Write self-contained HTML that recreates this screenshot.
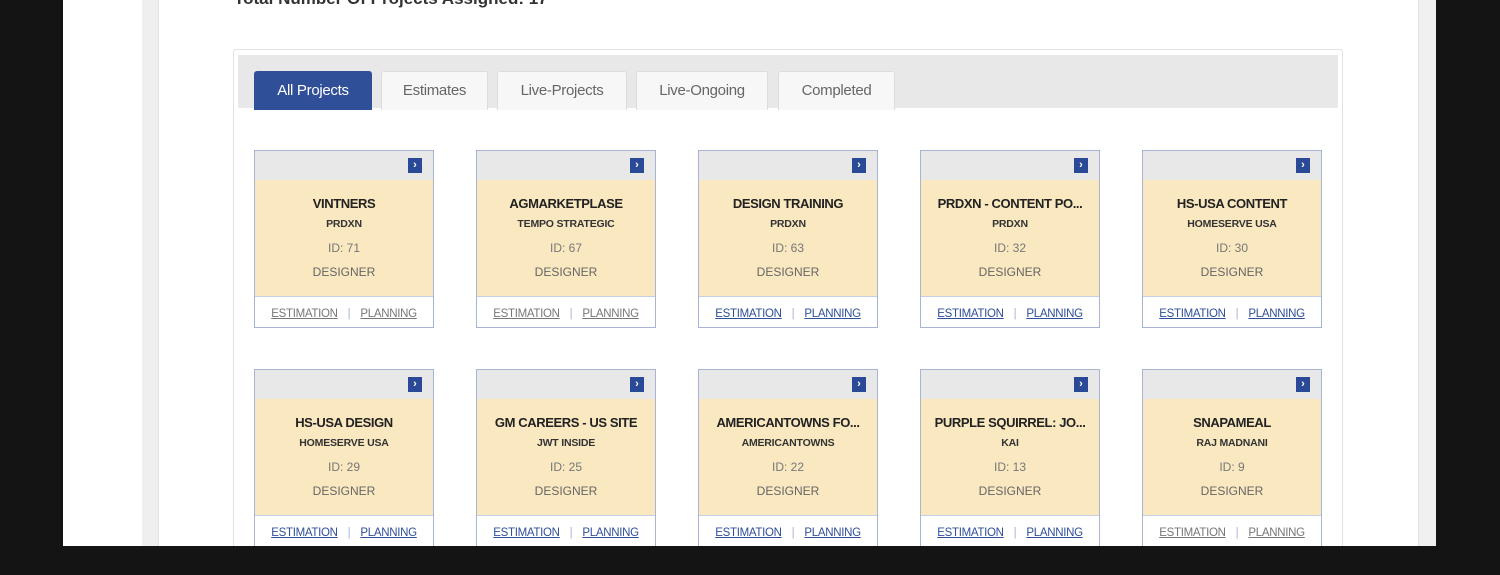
<!DOCTYPE html>
<html><head><style>
body{margin:0;width:1500px;height:575px;background:#141414;position:relative;overflow:hidden;font-family:"Liberation Sans",sans-serif}
.scr{position:absolute;left:63px;top:0;width:1372px;height:546px;background:#fff}
.gl{position:absolute;left:142px;top:0;width:16px;height:546px;background:#efefef;border-right:1px solid #e2e2e2}
.gr{position:absolute;left:1418px;top:0;width:17px;height:546px;background:#f0f0f0;border-left:1px solid #e2e2e2}
.ttl{position:absolute;left:234px;top:-11px;font-size:17px;color:#333;font-weight:bold}
.panel{position:absolute;left:233px;top:49px;width:1108px;height:520px;border:1px solid #e2e2e2;border-radius:3px;background:#fff}
.bar{position:absolute;left:4px;top:5px;width:1100px;height:53px;background:#e8e8e8}
.tab{position:absolute;top:21px;height:38px;background:#f7f7f7;border:1px solid #ddd;border-bottom:none;border-radius:3px 3px 0 0;font-size:15px;color:#666;text-align:center;line-height:38px;letter-spacing:-0.3px}
.tab.a{background:#2f4f98;color:#fff;border-color:#2f4f98}
.card{position:absolute;width:178px;height:176px;border:1px solid #a8b4d4;background:#fff}
.hd{height:29px;background:#e8e8e8;position:relative}
.ic{position:absolute;right:11px;top:7px;width:14px;height:15px;background:#2a4a98;color:#fff;font-size:11px;line-height:15px;text-align:center;font-weight:bold}
.bd{height:116px;background:#f9e8c0;text-align:center;color:#333;border-bottom:1px solid #c6cfe4}
.t1{padding-top:16px;font-size:13px;font-weight:bold;letter-spacing:-0.4px;color:#222}
.t2{margin-top:7px;font-size:10.5px;font-weight:bold;letter-spacing:-0.2px;color:#333}
.t3{margin-top:11px;font-size:12px;color:#777}
.t4{margin-top:10px;font-size:12px;color:#666}
.ft{height:30px;line-height:35px;text-align:center;font-size:11.5px;letter-spacing:-0.3px;color:#777}
.ft u{color:#777}
.ft.b u{color:#2f4f98}
.ft span{color:#a8b4d4;margin:0 10px}
</style></head><body>
<div class="scr"></div>
<div class="gl"></div><div class="gr"></div>
<div class="ttl">Total Number Of Projects Assigned: 17</div>
<div class="panel"><div class="bar"></div>
<div class="tab a" style="left:20px;width:116px">All Projects</div>
<div class="tab" style="left:147px;width:105px">Estimates</div>
<div class="tab" style="left:263px;width:128px">Live-Projects</div>
<div class="tab" style="left:402px;width:130px">Live-Ongoing</div>
<div class="tab" style="left:544px;width:115px">Completed</div>
</div>
<div id="cards"></div>
<script>
var d=[["VINTNERS","PRDXN",71,0],["AGMARKETPLASE","TEMPO STRATEGIC",67,0],["DESIGN TRAINING","PRDXN",63,1],["PRDXN - CONTENT PO...","PRDXN",32,1],["HS-USA CONTENT","HOMESERVE USA",30,1],
["HS-USA DESIGN","HOMESERVE USA",29,1],["GM CAREERS - US SITE","JWT INSIDE",25,1],["AMERICANTOWNS FO...","AMERICANTOWNS",22,1],["PURPLE SQUIRREL: JO...","KAI",13,1],["SNAPAMEAL","RAJ MADNANI",9,0]];
var h="";d.forEach(function(c,i){var x=254+222*(i%5),y=i<5?150:369;
h+='<div class="card" style="left:'+x+'px;top:'+y+'px"><div class="hd"><div class="ic">&#8250;</div></div><div class="bd"><div class="t1">'+c[0]+'</div><div class="t2">'+c[1]+'</div><div class="t3">ID: '+c[2]+'</div><div class="t4">DESIGNER</div></div><div class="ft'+(c[3]?' b':'')+'"><u>ESTIMATION</u><span>|</span><u>PLANNING</u></div></div>';});
document.getElementById("cards").innerHTML=h;
</script>
<div style="position:absolute;left:0;top:546px;width:1500px;height:29px;background:#141414"></div>
</body></html>
